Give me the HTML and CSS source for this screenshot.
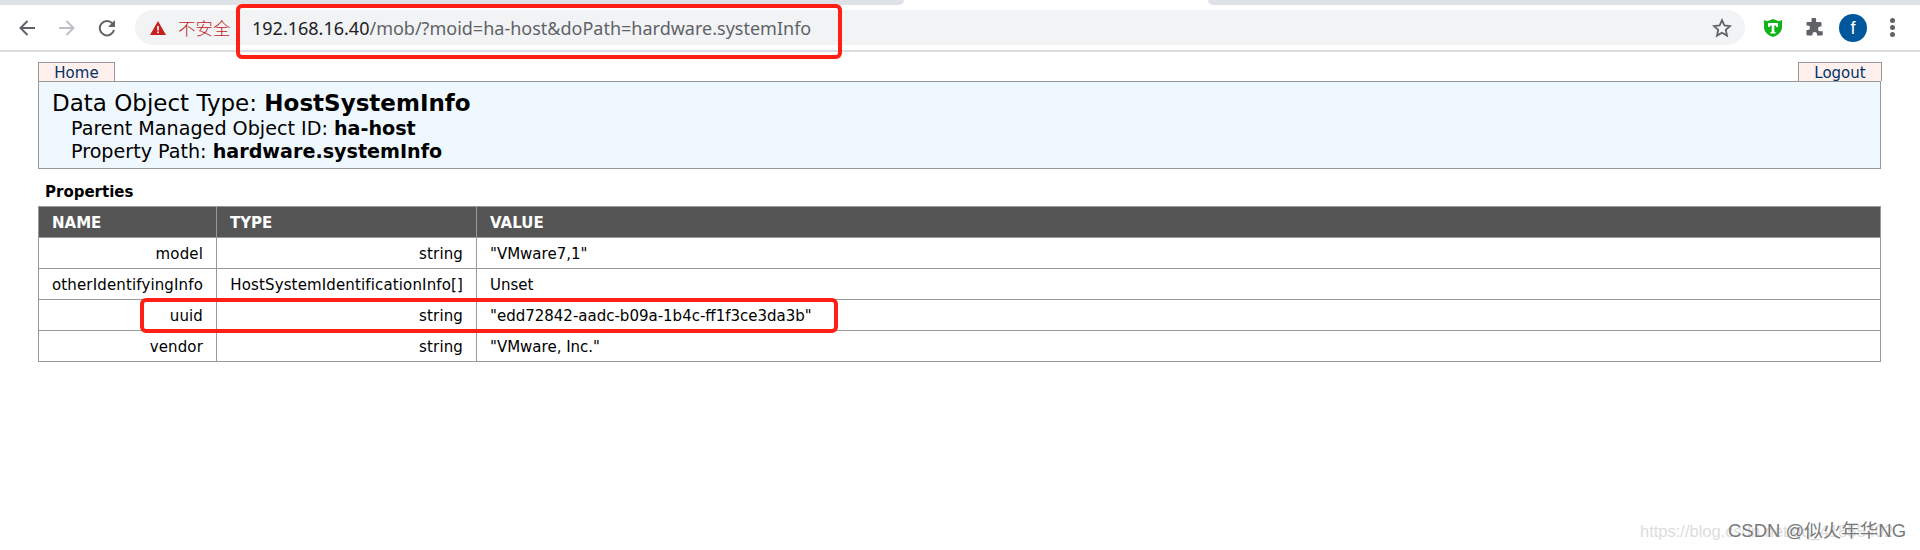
FILE: index.html
```html
<!DOCTYPE html>
<html lang="en">
<head>
<meta charset="utf-8">
<title>Managed Object Browser</title>
<link rel="stylesheet" href="styles.css">
</head>
<body>
<header class="chrome">
  <div class="tabstrip">
    <div class="tab-gap tab-gap-a"></div>
    <div class="tab-light"></div>
    <div class="tab-gap tab-gap-b"></div>
  </div>
  <div class="toolbar">
    <svg class="nav back" viewBox="0 0 18 18"><path d="M17 9H2.500M9.500 2L2.500 9l7 7" fill="none" stroke="#5f6368" stroke-width="2"/></svg>
    <svg class="nav forward" viewBox="0 0 18 18"><path d="M1 9h14.500M8.500 2l7 7-7 7" fill="none" stroke="#bdc1c6" stroke-width="2"/></svg>
    <svg class="nav reload" viewBox="0 0 18 18"><path d="M16 11a7.200 7.200 0 1 1-1.600-6.600" fill="none" stroke="#5f6368" stroke-width="2"/><path d="M17 1v7h-7z" fill="#5f6368"/></svg>
    <div class="omnibox">
      <svg class="warn" viewBox="0 0 16 14"><path d="M8 0l8 14H0z" fill="#c5221f"/><path d="M7.200 5h1.600v4.600H7.200zM7.200 10.600h1.600v1.600H7.200z" fill="#fff"/></svg>
      <span class="insecure">不安全</span>
      <span class="sep"></span>
      <span class="url"><span class="host">192.168.16.40</span>/mob/?moid=ha-host&amp;doPath=hardware.systemInfo</span>
      <svg class="star" viewBox="0 0 20 20"><path d="M10 2.200l2.400 5.300 5.700.6-4.300 3.800 1.200 5.700-5-2.900-5 2.900 1.200-5.700L1.900 8.100l5.700-.6z" fill="none" stroke="#5f6368" stroke-width="1.800"/></svg>
    </div>
    <svg class="ext-t" viewBox="0 0 20 20"><path d="M1 2l3 1.200L10 1l6 2.200L19 2v7c0 5-4 8.500-9 10C5 17.500 1 14 1 9z" fill="#12b31a"/><path d="M5 5h10v4h-1.600L12.600 7.600H11.300v6.200l1.400.8v.9H7.300v-.9l1.400-.8V7.600H7.400L6.600 9H5z" fill="#fff"/></svg>
    <svg class="ext-puzzle" viewBox="0 0 20 20"><path d="M7.500 1.500a2.300 2.300 0 0 1 4.600 0V4h4.400a1 1 0 0 1 1 1v3.600h-1.200a2.300 2.300 0 0 0 0 4.600h2.400v3.300a1 1 0 0 1-1 1H13v-1.200a2.300 2.300 0 0 0-4.600 0V17.500H3.500a1 1 0 0 1-1-1V12h1.200a2.300 2.300 0 0 0 0-4.600H2.500V5a1 1 0 0 1 1-1h4z" fill="#5f6368"/></svg>
    <div class="avatar">f</div>
    <div class="kebab"><i></i><i></i><i></i></div>
  </div>
</header>
<main class="page">
  <div class="tabs">
    <a class="tab tab-home">Home</a>
    <a class="tab tab-logout">Logout</a>
  </div>
  <section class="summary">
    <h1>Data Object Type: <b>HostSystemInfo</b></h1>
    <p>Parent Managed Object ID: <b>ha-host</b></p>
    <p>Property Path: <b>hardware.systemInfo</b></p>
  </section>
  <h2>Properties</h2>
  <table class="props">
    <colgroup><col class="c1"><col class="c2"><col></colgroup>
    <thead><tr><th>NAME</th><th>TYPE</th><th>VALUE</th></tr></thead>
    <tbody>
      <tr><td class="r">model</td><td class="r">string</td><td>"VMware7,1"</td></tr>
      <tr><td class="r">otherIdentifyingInfo</td><td class="r">HostSystemIdentificationInfo[]</td><td>Unset</td></tr>
      <tr><td class="r">uuid</td><td class="r">string</td><td>"edd72842-aadc-b09a-1b4c-ff1f3ce3da3b"</td></tr>
      <tr><td class="r">vendor</td><td class="r">string</td><td>"VMware, Inc."</td></tr>
    </tbody>
  </table>
</main>
<div class="mark mark-url"></div>
<div class="mark mark-uuid"></div>
<div class="watermark"><span class="wm-url">https://blog.csdn.net/qq_41855402</span><span class="wm-name">CSDN @似火年华NG</span></div>
</body>
</html>
```
FILE: styles.css
```css
* { box-sizing: border-box; }
html, body { margin: 0; padding: 0; }
body { width: 1920px; height: 550px; overflow: hidden; background: #fff; font-family: "DejaVu Sans", Verdana, sans-serif; color: #000; position: relative; }
.chrome { height: 52px; border-bottom: 2px solid #dadce0; }
.tabstrip { height: 5px; display: flex; }
.tab-gap { height: 5px; background: #dee1e6; }
.tab-gap-a { width: 904px; border-bottom-right-radius: 5px; }
.tab-light { width: 304px; height: 5px; }
.tab-gap-b { flex: 1; border-bottom-left-radius: 5px; }
.toolbar { height: 45px; display: flex; align-items: center; padding-left: 18px; }
.nav { width: 18px; height: 18px; flex: none; margin-right: 22px; }
.omnibox { width: 1610px; height: 35px; margin-left: -3px; background: #f1f3f4; border-radius: 18px; display: flex; align-items: center; padding-left: 15px; flex: none; }
.warn { width: 16px; height: 14px; flex: none; }
.insecure { width: 52px; margin-left: 12px; font: 300 17.5px "Noto Sans CJK SC", sans-serif; color: #c5221f; white-space: nowrap; }
.sep { width: 1px; height: 20px; background: #80868b; margin: 0 13px 0 8px; flex: none; }
.url { font: 18px "Noto Sans", "Liberation Sans", sans-serif; color: #5f6368; white-space: nowrap; }
.host { color: #202124; }
.star { width: 20px; height: 20px; margin-left: auto; margin-right: 13px; flex: none; }
.ext-t { width: 20px; height: 20px; flex: none; margin-left: 18px; }
.ext-puzzle { width: 20px; height: 20px; flex: none; margin-left: 21px; }
.avatar { width: 28px; height: 28px; flex: none; margin-left: 15px; border-radius: 50%; background: #01579b; color: #fff; font: 18px/28px "Liberation Sans", sans-serif; text-align: center; }
.kebab { display: flex; flex-direction: column; gap: 2px; margin-left: 23px; }
.kebab i { display: block; width: 5px; height: 5px; border-radius: 50%; background: #5f6368; }
.page { padding: 10px 0 0 38px; width: 1881px; }
.tabs { display: flex; justify-content: space-between; height: 19px; }
.tab { height: 19px; padding-top: 1px; border: 1px solid #999; border-bottom: 0; background: #fff0ee; color: #036; font-size: 15px; line-height: 19px; text-align: center; overflow: hidden; }
.tab-home { width: 77px; }
.tab-logout { width: 84px; margin-right: -1px; }
.summary { height: 88px; background: #f0f8ff; border: 1px solid #999; padding: 8px 13px 0; }
.summary h1 { margin: 0; font-size: 23px; font-weight: 400; line-height: 27px; }
.summary p { margin: 0 0 0 19px; font-size: 19.15px; line-height: 23px; }
h2 { margin: 14px 0 4px 7px; font-size: 15px; line-height: 19px; font-weight: 700; }
.props { width: 100%; border-collapse: collapse; table-layout: fixed; font-size: 15px; }
.c1 { width: 178px; }
.c2 { width: 260px; }
.props th, .props td { border: 1px solid #999; height: 31px; padding: 2px 13px 0; line-height: 19px; }
.props th { background: #555; color: #fff; text-align: left; font-weight: 700; }
.props td.r { text-align: right; letter-spacing: .14px; }
.mark { position: absolute; border: 4px solid #ff1f14; border-radius: 6px; }
.mark-url { left: 236px; top: 4px; width: 606px; height: 55px; }
.mark-uuid { left: 140px; top: 298px; width: 698px; height: 35px; }
.watermark { position: absolute; right: 0; top: 521px; width: 300px; height: 20px; font: 18.5px/20px "Liberation Sans", sans-serif; }
.wm-url { position: absolute; left: 20px; top: 0; color: #ddd; font-size: 16.5px; white-space: nowrap; }
.wm-name { position: absolute; left: 108px; top: 0; color: #7a7a7a; white-space: nowrap; font-family: "Liberation Sans", "Noto Sans CJK SC", sans-serif; }
```
